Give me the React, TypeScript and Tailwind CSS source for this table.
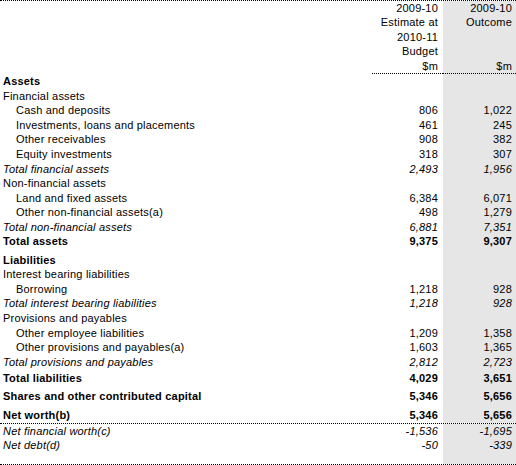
type Row = {
  label: string
  est?: string
  out?: string
  kind: "section" | "group" | "item" | "total" | "grand"
  pad?: string
  line?: boolean
}

const rows: Row[] = [
  { label: "Assets", kind: "section" },
  { label: "Financial assets", kind: "group" },
  { label: "Cash and deposits", est: "806", out: "1,022", kind: "item" },
  { label: "Investments, loans and placements", est: "461", out: "245", kind: "item" },
  { label: "Other receivables", est: "908", out: "382", kind: "item" },
  { label: "Equity investments", est: "318", out: "307", kind: "item" },
  { label: "Total financial assets", est: "2,493", out: "1,956", kind: "total" },
  { label: "Non-financial assets", kind: "group" },
  { label: "Land and fixed assets", est: "6,384", out: "6,071", kind: "item" },
  { label: "Other non-financial assets(a)", est: "498", out: "1,279", kind: "item" },
  { label: "Total non-financial assets", est: "6,881", out: "7,351", kind: "total" },
  { label: "Total assets", est: "9,375", out: "9,307", kind: "grand" },
  { label: "Liabilities", kind: "section", pad: "pt-[3.5px]" },
  { label: "Interest bearing liabilities", kind: "group" },
  { label: "Borrowing", est: "1,218", out: "928", kind: "item" },
  { label: "Total interest bearing liabilities", est: "1,218", out: "928", kind: "total" },
  { label: "Provisions and payables", kind: "group" },
  { label: "Other employee liabilities", est: "1,209", out: "1,358", kind: "item" },
  { label: "Other provisions and payables(a)", est: "1,603", out: "1,365", kind: "item" },
  { label: "Total provisions and payables", est: "2,812", out: "2,723", kind: "total" },
  { label: "Total liabilities", est: "4,029", out: "3,651", kind: "grand", pad: "pt-[2px]" },
  { label: "Shares and other contributed capital", est: "5,346", out: "5,656", kind: "grand", pad: "pt-[3.5px]" },
  { label: "Net worth(b)", est: "5,346", out: "5,656", kind: "grand", pad: "pt-[4px]", line: true },
  { label: "Net financial worth(c)", est: "-1,536", out: "-1,695", kind: "total" },
  { label: "Net debt(d)", est: "-50", out: "-339", kind: "total", pad: "pb-[11px]", line: true },
]

const header = [
  ["2009-10", "2009-10"],
  ["Estimate at", "Outcome"],
  ["2010-11", ""],
  ["Budget", ""],
  ["$m", "$m"],
]

function styleFor(kind: Row["kind"]) {
  if (kind === "section" || kind === "grand") return "font-bold"
  if (kind === "total") return "italic"
  return ""
}

export default function App() {
  return (
    <div className="w-[516px] h-[465px] bg-white text-black text-[11px] leading-[14.6px] tracking-[0.2px] font-['Liberation_Sans',Arial,sans-serif] border-t border-dotted border-black overflow-hidden">
      <div className="grid grid-cols-[372px_71px_73px]">
        <div />
        <div className="border-b border-dotted border-black text-right pr-[5px] leading-[14.4px]">
          {header.map((h, i) => (
            <div key={i} className="h-[14.4px]">{h[0]}</div>
          ))}
        </div>
        <div className="border-b border-dotted border-black bg-[#e6e6e6] text-right pr-[4px] leading-[14.4px]">
          {header.map((h, i) => (
            <div key={i} className="h-[14.4px]">{h[1]}</div>
          ))}
        </div>
      </div>

      {rows.map((r, i) => {
        const s = styleFor(r.kind)
        const pad = r.pad ?? ""
        return (
          <div
            key={i}
            className={`grid grid-cols-[372px_71px_73px] ${r.line ? "border-b border-dotted border-black" : ""}`}
          >
            <div className={`${pad} ${s} ${r.kind === "item" ? "pl-[16px]" : "pl-[3px]"} whitespace-nowrap`}>
              {r.label}
            </div>
            <div className={`${pad} ${s} text-right pr-[5px]`}>{r.est}</div>
            <div className={`${pad} ${s} bg-[#e6e6e6] text-right pr-[4px]`}>{r.out}</div>
          </div>
        )
      })}
    </div>
  )
}
